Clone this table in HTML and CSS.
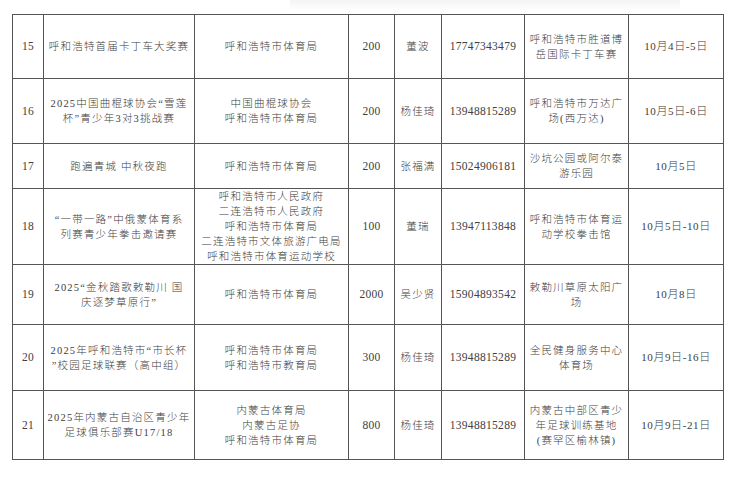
FILE: index.html
```html
<!DOCTYPE html>
<html lang="zh">
<head>
<meta charset="utf-8">
<link rel="stylesheet" href="styles.css">
</head>
<body>
<div class="page">
  <div class="shade"></div>
  <table class="events">
    <colgroup>
      <col class="c-no"><col class="c-name"><col class="c-org"><col class="c-num"><col class="c-person"><col class="c-phone"><col class="c-place"><col class="c-date">
    </colgroup>
    <tbody>
      <tr class="r15">
        <td class="num">15</td>
        <td>呼和浩特首届卡丁车大奖赛</td>
        <td>呼和浩特市体育局</td>
        <td class="num">200</td>
        <td>董波</td>
        <td class="num">17747343479</td>
        <td>呼和浩特市胜道博<br>岳国际卡丁车赛</td>
        <td class="date">10月4日-5日</td>
      </tr>
      <tr class="r16">
        <td class="num">16</td>
        <td>2025中国曲棍球协会“雪莲<br>杯”青少年3对3挑战赛</td>
        <td>中国曲棍球协会<br>呼和浩特市体育局</td>
        <td class="num">200</td>
        <td>杨佳琦</td>
        <td class="num">13948815289</td>
        <td>呼和浩特市万达广<br>场(西万达)</td>
        <td class="date">10月5日-6日</td>
      </tr>
      <tr class="r17">
        <td class="num">17</td>
        <td>跑遍青城 中秋夜跑</td>
        <td>呼和浩特市体育局</td>
        <td class="num">200</td>
        <td>张福满</td>
        <td class="num">15024906181</td>
        <td>沙坑公园或阿尔泰<br>游乐园</td>
        <td class="date">10月5日</td>
      </tr>
      <tr class="r18">
        <td class="num">18</td>
        <td>“一带一路”中俄蒙体育系<br>列赛青少年拳击邀请赛</td>
        <td>呼和浩特市人民政府<br>二连浩特市人民政府<br>呼和浩特市体育局<br>二连浩特市文体旅游广电局<br>呼和浩特市体育运动学校</td>
        <td class="num">100</td>
        <td>董瑞</td>
        <td class="num">13947113848</td>
        <td>呼和浩特市体育运<br>动学校拳击馆</td>
        <td class="date">10月5日-10日</td>
      </tr>
      <tr class="r19">
        <td class="num">19</td>
        <td>2025“金秋踏歌敕勒川 国<br>庆逐梦草原行”</td>
        <td>呼和浩特市体育局</td>
        <td class="num">2000</td>
        <td>吴少贤</td>
        <td class="num">15904893542</td>
        <td>敕勒川草原太阳广<br>场</td>
        <td class="date">10月8日</td>
      </tr>
      <tr class="r20">
        <td class="num">20</td>
        <td>2025年呼和浩特市“市长杯<br>”校园足球联赛（高中组）</td>
        <td>呼和浩特市体育局<br>呼和浩特市教育局</td>
        <td class="num">300</td>
        <td>杨佳琦</td>
        <td class="num">13948815289</td>
        <td>全民健身服务中心<br>体育场</td>
        <td class="date">10月9日-16日</td>
      </tr>
      <tr class="r21">
        <td class="num">21</td>
        <td>2025年内蒙古自治区青少年<br>足球俱乐部赛U17/18</td>
        <td>内蒙古体育局<br>内蒙古足协<br>呼和浩特市体育局</td>
        <td class="num">800</td>
        <td>杨佳琦</td>
        <td class="num">13948815289</td>
        <td>内蒙古中部区青少<br>年足球训练基地<br>(赛罕区榆林镇)</td>
        <td class="date">10月9日-21日</td>
      </tr>
    </tbody>
  </table>
</div>
</body>
</html>
```

FILE: styles.css
```css
html, body {
  margin: 0;
  padding: 0;
  background: #ffffff;
}
.page {
  width: 737px;
  height: 500px;
  padding: 0 0 0 12px;
  box-sizing: border-box;
}
.shade {
  height: 14px;
  margin-left: 278px;
  width: 390px;
  background: linear-gradient(to bottom, #f4f4f4 0, #f9f9f9 5px, #ffffff 10px);
  border-radius: 0 0 8px 8px;
}
.events {
  border-collapse: collapse;
  table-layout: fixed;
  width: 711px;
  font-family: "Liberation Serif", "Noto Sans CJK SC", serif;
  color: #404040;
}
.events td {
  border: 1px solid #555555;
  text-align: center;
  vertical-align: middle;
  padding: 0;
  font-size: 10.5px;
  letter-spacing: 1.2px;
  line-height: 15px;
  font-weight: 300;
  white-space: nowrap;
}
.events td.num {
  font-size: 11.5px;
  letter-spacing: 0.3px;
  font-weight: 400;
}
.events td.date {
  font-size: 11px;
  letter-spacing: 0.6px;
}
.c-no { width: 31px; }
.c-name { width: 151px; }
.c-org { width: 154px; }
.c-num { width: 46px; }
.c-person { width: 47px; }
.c-phone { width: 83px; }
.c-place { width: 104px; }
.c-date { width: 95px; }
.r15 td { height: 63px; }
.r16 td { height: 64px; }
.r17 td { height: 44px; }
.r18 td { height: 75px; }
.r19 td { height: 59px; }
.r20 td { height: 65px; }
.r21 td { height: 68px; }
```
